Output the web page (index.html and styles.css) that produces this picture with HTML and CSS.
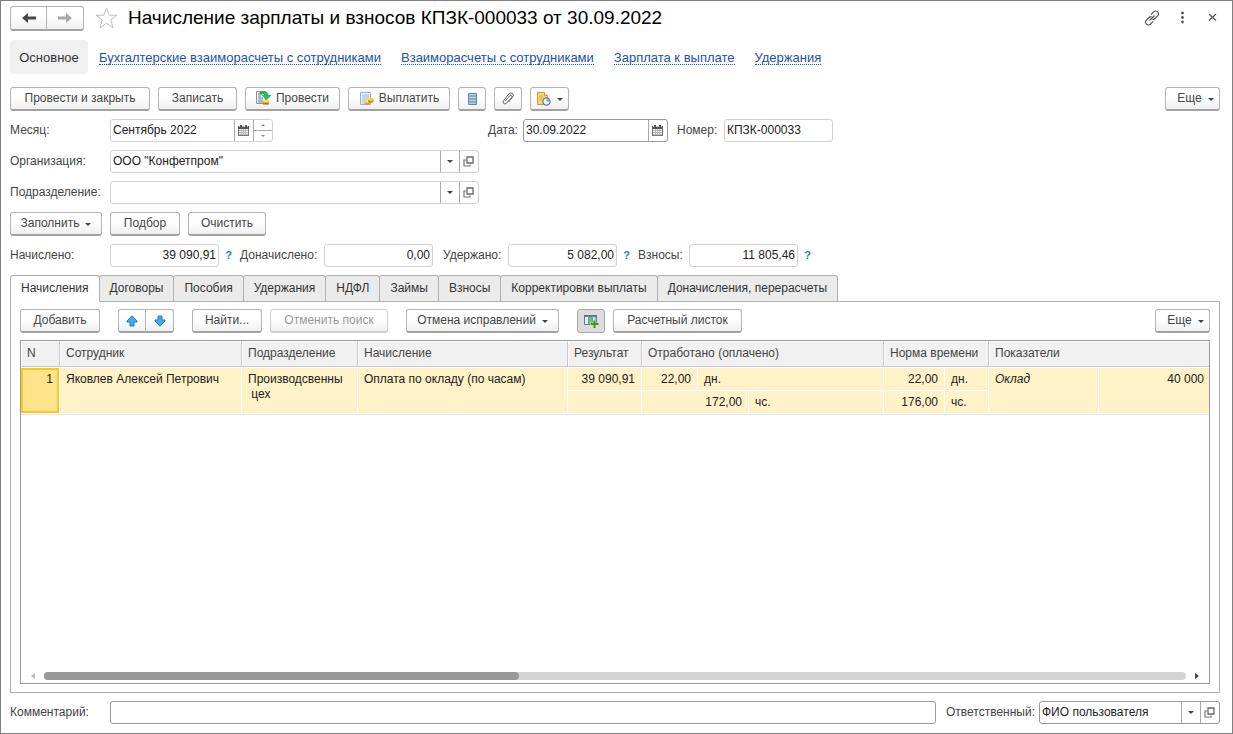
FILE: index.html
```html
<!DOCTYPE html>
<html lang="ru">
<head>
<meta charset="utf-8">
<title>Начисление зарплаты и взносов КПЗК-000033 от 30.09.2022</title>
<link rel="stylesheet" href="styles.css">
</head>
<body>
<svg class="defs" aria-hidden="true">
  <symbol id="calendar" viewBox="0 0 11 11"><path d="M0 1h11v10H0z" fill="#777"/><path d="M0 1h11v3H0z" fill="#555"/><path d="M2 0h2v2H2zM7 0h2v2H7z" fill="#555"/><path d="M1 1.500h1M4 1.500h3M9 1.500h1" stroke="#ccc" stroke-width="1"/><path d="M1 4h9v6H1z" fill="#eee"/><path d="M3.500 4v6M5.500 4v6M7.500 4v6M1 5.500h9M1 7.500h9M1 9.500h9" stroke="#bbb" stroke-width="1"/></symbol>
  <symbol id="open" viewBox="0 0 11 11"><path d="M4 1h6v6H4z" fill="none" stroke="#666" stroke-width="1.300"/><path d="M3 4H1v6h6V8.500" fill="none" stroke="#777" stroke-width="1.200"/></symbol>
</svg>
<main class="window">
  <header class="title-row">
    <div class="split">
      <button class="btn nav" aria-label="Назад"><svg width="14" height="12" viewBox="0 0 14 12"><path d="M0 6 6 1v3.500h8v3H6V11z" fill="#484848"/></svg></button>
      <button class="btn nav" aria-label="Вперед"><svg width="14" height="12" viewBox="0 0 14 12"><path d="M14 6 8 1v3.500H0v3h8V11z" fill="#a8a8a8"/></svg></button>
    </div>
    <button class="icon-btn star" aria-label="Избранное"><svg width="23" height="22" viewBox="0 0 23 22"><path d="M11.500 1 14.200 8.200H22l-6.200 4.800 2.300 7.900-6.600-4.700L4.900 20.900 7.200 13 1 8.200h7.800z" fill="#fff" stroke="#b9bdc4"/></svg></button>
    <h1>Начисление зарплаты и взносов КПЗК-000033 от 30.09.2022</h1>
    <div class="window-tools">
      <button class="icon-btn" aria-label="Ссылка"><svg width="16" height="16" viewBox="0 0 16 16" fill="none" stroke="#555" stroke-width="1.200"><path d="M7 4.500 9.600 1.900a2.700 2.700 0 0 1 4 0 2.700 2.700 0 0 1 0 4L11 8.500a2.700 2.700 0 0 1-2.500.7M9 11.500l-2.600 2.600a2.700 2.700 0 0 1-4 0 2.700 2.700 0 0 1 0-4L5 7.500a2.700 2.700 0 0 1 2.500-.7M5.500 10.500l5-5"/></svg></button>
      <button class="icon-btn" aria-label="Меню"><svg width="16" height="16" viewBox="0 0 16 16" fill="#555"><circle cx="8.500" cy="3" r="1.400"/><circle cx="8.500" cy="7.500" r="1.400"/><circle cx="8.500" cy="12" r="1.400"/></svg></button>
      <button class="icon-btn" aria-label="Закрыть"><svg width="16" height="16" viewBox="0 0 16 16" stroke="#555" stroke-width="1.200"><path d="m5 4 7 6.500m0-6.500-7 6.500"/></svg></button>
    </div>
  </header>

  <nav class="links">
    <span class="current">Основное</span>
    <a href="#">Бухгалтерские взаиморасчеты с сотрудниками</a>
    <a href="#">Взаиморасчеты с сотрудниками</a>
    <a href="#">Зарплата к выплате</a>
    <a href="#">Удержания</a>
  </nav>

  <div class="bar">
    <button class="btn w140">Провести и закрыть</button>
    <button class="btn w79">Записать</button>
    <button class="btn w95"><svg width="15" height="15" viewBox="0 0 15 15"><path d="M.500.500h9v12h-9z" fill="#f4f8fb" stroke="#8296ab"/><path d="M2 3h4M2 5h3M2 7h5M2 9h5M2 11h5" stroke="#64809a"/><path d="M4 1h4c3 0 4 1 4 3.500h2.500L10.500 9 6.500 4.500H9C9 3 7 2.500 4 2.800z" fill="#22c55e" stroke="#159447" stroke-width=".7"/><path d="M7 9.500h6V14H7z" fill="#e5b52c"/><ellipse cx="10" cy="9.800" rx="3" ry="1.200" fill="#ffe066"/><path d="M7 12q3 1.500 6 0" stroke="#a87812" fill="none"/></svg>Провести</button>
    <button class="btn w102"><svg width="15" height="15" viewBox="0 0 15 15"><path d="M1.500 1.500h10v12h-10z" fill="#f1f6fa" stroke="#9bb0c3"/><path d="M3 4h7M3 6h7M3 8h6M3 10h4M3 12h3" stroke="#9db5c9"/><path d="M6 10.500v2q2.500 2 5 0v-2z" fill="#d99d20"/><ellipse cx="8.500" cy="10.800" rx="2.500" ry="1.300" fill="#ffd95a"/><path d="M9 8v3q2.800 2 5.500 0V8z" fill="#cf9017"/><ellipse cx="11.800" cy="8.200" rx="2.700" ry="1.600" fill="#f9cf4c"/></svg>Выплатить</button>
    <button class="btn w28" aria-label="Реестр"><svg width="9" height="12" viewBox="0 0 9 12"><path d="M.500.500h8v11h-8z" fill="#b3d0e8" stroke="#6287a8"/><path d="M0 3h9M0 6h9M0 9h9" stroke="#6287a8"/></svg></button>
    <button class="btn w28" aria-label="Файлы"><svg width="12" height="13" viewBox="0 0 12 13" fill="none" stroke="#666" stroke-width="1"><path d="m3.300 8.900 4.600-5.400q1.100-.9 1.800 0t0 1.800l-5.200 6q-1.500 1.300-2.900.1-1.300-1.300 0-2.800L6.800 2Q8.900.1 10.600 1.500q1.600 1.600-.2 3.800L6.500 10"/></svg></button>
    <button class="btn w39" aria-label="Отчеты"><svg width="14" height="14" viewBox="0 0 14 14"><path d="M.500.500h7l3 3v9h-10z" fill="#f7d774" stroke="#cb9d36"/><path d="M7.500.500v3h3" fill="#fff0b8" stroke="#cb9d36"/><path d="M2 4h4M2 6h5M2 8h3" stroke="#d7b04e"/><circle cx="9.500" cy="9.500" r="3.600" fill="#f0f7ff" stroke="#66819f" stroke-width="1.300"/><path d="M9.500 6.500v3h3a3 3 0 0 0-3-3z" fill="#7fa8d4"/></svg><i class="caret"></i></button>
    <button class="btn more push">Еще<i class="caret"></i></button>
  </div>

  <div class="row">
    <label class="lead" for="month">Месяц:</label>
    <div class="field month"><input id="month" value="Сентябрь 2022"><button aria-label="Календарь"><svg width="11" height="11"><use href="#calendar"/></svg></button><span class="spin"><button aria-label="Больше"><i class="caret up"></i></button><button aria-label="Меньше"><i class="caret tiny"></i></button></span></div>
    <label class="date-label" for="date">Дата:</label>
    <div class="field dark date"><input id="date" value="30.09.2022"><button aria-label="Календарь"><svg width="11" height="11"><use href="#calendar"/></svg></button></div>
    <label class="number-label" for="number">Номер:</label>
    <div class="field number"><input id="number" value="КПЗК-000033"></div>
  </div>
  <div class="row">
    <label class="lead" for="org">Организация:</label>
    <div class="field wide"><input id="org" value="ООО &quot;Конфетпром&quot;"><button aria-label="Выбрать"><i class="caret"></i></button><button aria-label="Открыть"><svg width="11" height="11"><use href="#open"/></svg></button></div>
  </div>
  <div class="row">
    <label class="lead" for="dept">Подразделение:</label>
    <div class="field wide"><input id="dept"><button aria-label="Выбрать"><i class="caret"></i></button><button aria-label="Открыть"><svg width="11" height="11"><use href="#open"/></svg></button></div>
  </div>
  <div class="bar">
    <button class="btn w92">Заполнить<i class="caret"></i></button>
    <button class="btn w70">Подбор</button>
    <button class="btn w78">Очистить</button>
  </div>
  <div class="row totals">
    <label class="lead" for="t1">Начислено:</label>
    <div class="field sum"><input id="t1" value="39 090,91"></div><button class="help">?</button>
    <label class="t2" for="t2">Доначислено:</label>
    <div class="field sum"><input id="t2" value="0,00"></div>
    <label class="t3" for="t3">Удержано:</label>
    <div class="field sum"><input id="t3" value="5 082,00"></div><button class="help">?</button>
    <label class="t4" for="t4">Взносы:</label>
    <div class="field sum"><input id="t4" value="11 805,46"></div><button class="help">?</button>
  </div>

  <div class="tabs" role="tablist">
    <button role="tab" class="tab active" aria-selected="true">Начисления</button>
    <button role="tab" class="tab">Договоры</button>
    <button role="tab" class="tab">Пособия</button>
    <button role="tab" class="tab">Удержания</button>
    <button role="tab" class="tab">НДФЛ</button>
    <button role="tab" class="tab">Займы</button>
    <button role="tab" class="tab">Взносы</button>
    <button role="tab" class="tab">Корректировки выплаты</button>
    <button role="tab" class="tab">Доначисления, перерасчеты</button>
  </div>
  <section class="panel">
    <div class="bar panel-bar">
      <button class="btn w80">Добавить</button>
      <div class="split">
        <button class="btn w28" aria-label="Вверх"><svg width="12" height="12" viewBox="0 0 12 12"><path d="M6 .8 11 6v1H8v4H4V7H1V6z" fill="#42adf0" stroke="#2478b4"/></svg></button>
        <button class="btn w28" aria-label="Вниз"><svg width="12" height="12" viewBox="0 0 12 12"><path d="M6 11.200 11 6V5H8V1H4v4H1v1z" fill="#42adf0" stroke="#2478b4"/></svg></button>
      </div>
      <div class="group">
        <button class="btn w70">Найти...</button>
        <button class="btn w118" disabled>Отменить поиск</button>
      </div>
      <button class="btn w153">Отмена исправлений<i class="caret"></i></button>
      <div class="group">
        <button class="btn w28 pressed" aria-label="Настройка колонок"><svg width="15" height="14" viewBox="0 0 15 14"><path d="M.500 1.500h12v9H.500z" fill="#e8f2fa" stroke="#547d9c"/><path d="M0 1h13v2H0z" fill="#547d9c"/><path d="M5 3h4v7H5z" fill="#76bf64"/><path d="M4.500 2v8.500M8.500 2v8.500M11 3v5" stroke="#7698b0"/><path d="M10.500 6v8M6.500 10h8" stroke="#dcdcdc" stroke-width="3"/><path d="M10.500 6.500V14M7 10h7.500" stroke="#3d9a12" stroke-width="2"/></svg></button>
        <button class="btn w129">Расчетный листок</button>
      </div>
      <button class="btn more push">Еще<i class="caret"></i></button>
    </div>
    <div class="grid">
      <table>
        <colgroup><col class="c39"><col class="c182"><col class="c116"><col class="c210"><col class="c74"><col class="c56"><col class="c51"><col class="c135"><col class="c61"><col class="c44"><col class="c110"><col></colgroup>
        <thead><tr><th>N</th><th>Сотрудник</th><th>Подразделение</th><th>Начисление</th><th>Результат</th><th colspan="3">Отработано (оплачено)</th><th colspan="2">Норма времени</th><th colspan="2">Показатели</th></tr></thead>
        <tbody>
          <tr><td class="num selected" rowspan="2">1</td><td rowspan="2">Яковлев Алексей Петрович</td><td rowspan="2" class="pre">Производсвенны
 цех</td><td rowspan="2">Оплата по окладу (по часам)</td><td class="num">39 090,91</td><td class="num">22,00</td><td colspan="2">дн.</td><td class="num">22,00</td><td class="edge">дн.</td><td rowspan="2"><em>Оклад</em></td><td rowspan="2" class="num last">40 000</td></tr>
          <tr><td></td><td colspan="2" class="num">172,00</td><td>чс.</td><td class="num">176,00</td><td>чс.</td></tr>
        </tbody>
      </table>
      <div class="scroll"><i class="arrow left"></i><div class="track"><div class="thumb"></div></div><i class="arrow right"></i></div>
    </div>
  </section>

  <footer class="row">
    <label class="lead" for="comment">Комментарий:</label>
    <div class="field dark grow"><input id="comment"></div>
    <label class="resp-label" for="resp">Ответственный:</label>
    <div class="field dark resp"><input id="resp" value="ФИО пользователя"><button aria-label="Выбрать"><i class="caret"></i></button><button aria-label="Открыть"><svg width="11" height="11"><use href="#open"/></svg></button></div>
  </footer>
</main>
</body>
</html>
```
FILE: styles.css
```css
* { box-sizing: border-box; }
body { margin: 0; background: #fff; color: #444; font: 12px/15px "Liberation Sans", Arial, sans-serif; }
button, input { font: inherit; color: inherit; margin: 0; }
button { cursor: pointer; }
.defs { position: absolute; width: 0; height: 0; }
.window { min-height: 100vh; display: flex; flex-direction: column; gap: 8px; padding: 4px 12px 9px 9px; border: 1px solid #808080; }

.title-row { display: flex; align-items: center; height: 26px; }
h1 { margin: 0 0 0 10px; font-size: 19px; line-height: 24px; font-weight: 400; color: #000; }
.icon-btn { display: flex; align-items: center; justify-content: center; padding: 0; border: 0; background: none; }
.star { margin-left: 11px; }
.window-tools { display: flex; gap: 14px; margin-left: auto; }

.links { display: flex; align-items: center; gap: 20px; height: 34px; margin-top: 1px; font-size: 13px; }
.links .current { width: 78px; margin-right: -9px; padding: 10px 0 9px; border-radius: 4px; background: #f0f0f0; text-align: center; color: #333; }
.links a { margin-top: 2px; color: #1d50b0; text-decoration: none; border-bottom: 1px dotted #1d50b0; line-height: 13px; }

.bar { display: flex; gap: 8px; }
.links + .bar { margin-top: 5px; }
.btn { display: flex; align-items: center; justify-content: center; height: 24px; padding: 0; border: 1px solid #b4b4b4; border-bottom: 2px solid #a2a2a2; border-radius: 3px; background: linear-gradient(#fff 40%, #f0f0f0); color: #444; white-space: nowrap; }
.btn:disabled { color: #999; border-color: #d0d0d0; }
.w95 svg, .w102 svg { margin-right: 5px; }
.nav { width: 37px; height: 25px; }
.split { display: flex; }
.split .btn:first-child { border-radius: 3px 0 0 3px; }
.split .btn + .btn { width: 38px; margin-left: -1px; border-radius: 0 3px 3px 0; }
.split .w28 + .w28 { width: 29px; }
.pressed { background: #dcdcdc; border-bottom-width: 1px; border-color: #a8a8a8; }
.w28 { width: 28px; } .w39 { width: 39px; } .w70 { width: 70px; } .w78 { width: 78px; } .w79 { width: 79px; }
.w80 { width: 80px; } .w92 { width: 92px; } .w95 { width: 95px; } .w102 { width: 102px; }
.w118 { width: 118px; } .w129 { width: 129px; } .w140 { width: 140px; } .w153 { width: 153px; }
.more { width: 55px; padding-left: 6px; }
.push { margin-left: auto; }
.group { display: flex; gap: 8px; }
.caret { width: 0; height: 0; border: 3px solid transparent; border-top-color: #444; border-bottom: 0; }
.btn .caret { margin: 2px 0 0 6px; }
.tiny, .up { border-width: 2px; border-top-color: #888; border-bottom: 0; }
.up { transform: rotate(180deg); }

.row { display: flex; align-items: center; height: 23px; }
.lead { width: 100px; flex: none; }
.field { display: flex; height: 23px; border: 1px solid #d2d2d2; border-radius: 3px; background: #fff; color: #222; }
.field.dark { border-color: #999; }
.field input { flex: 1; min-width: 0; width: 0; padding: 0 2px; border: 0; background: none; outline: 0; }
.field button { display: flex; align-items: center; justify-content: center; width: 19px; padding: 0 1px 0 0; border: 0; border-left: 1px solid #aaa; background: none; }
.spin { display: flex; flex-direction: column; width: 19px; border-left: 1px solid #aaa; }
.field .spin button { flex: 1; width: 18px; border: 0; }
.field .spin button + button { border-top: 1px solid #aaa; }
.month { width: 163px; } .date { width: 145px; } .number { width: 109px; }
.wide { width: 369px; } .sum { width: 109px; } .resp { width: 181px; }
.date-label { width: 35px; margin-left: 215px; }
.number-label { width: 47px; margin-left: 9px; }
.sum input { text-align: right; }
.help { width: 19px; padding: 0; border: 0; background: none; color: #1a7fc4; font-size: 11px; font-weight: 700; }
.t2 { width: 84px; margin-left: 2px; } .t3 { width: 65px; margin-left: 10px; } .t4 { width: 51px; margin-left: 2px; }
.grow { flex: 1; }
.resp-label { width: 93px; margin-left: 10px; }

.tabs { display: flex; }
.tab { height: 26px; margin-left: -1px; padding: 0 10px 1px; border: 1px solid #b0b0b0; border-bottom: 0; border-radius: 3px 3px 0 0; background: #ebebeb; color: #333; white-space: nowrap; }
.tab.active { margin-left: 0; height: 27px; margin-bottom: -1px; padding-bottom: 2px; background: #fff; position: relative; }
.panel { flex: 1; display: flex; flex-direction: column; gap: 7px; margin-top: -8px; padding: 7px 9px 8px; border: 1px solid #b0b0b0; }
.panel-bar { gap: 18px; }

.grid { flex: 1; display: flex; flex-direction: column; border: 1px solid #999; }
table { width: 100%; table-layout: fixed; border-collapse: separate; border-spacing: 0; border-bottom: 1px solid #e4e4e4; color: #222; }
.c39 { width: 39px; } .c182 { width: 182px; } .c116 { width: 116px; } .c210 { width: 210px; }
.c74 { width: 74px; } .c56 { width: 56px; } .c51 { width: 51px; } .c135 { width: 135px; }
.c61 { width: 61px; } .c44 { width: 44px; } .c110 { width: 110px; }
th { height: 26px; padding: 0 0 1px 5px; border: 1px solid #fff; border-right-color: #c8c8cc; border-bottom-color: #c8c8cc; background: #f1f1f1; color: #444; font-weight: 400; text-align: left; white-space: nowrap; }
th:last-child { border-right: 0; }
td { height: 23px; padding: 4px 6px 3px; border-right: 1px solid #fff; border-bottom: 1px solid #fff; background: #fff2c8; vertical-align: top; white-space: nowrap; }
tr:first-child td { border-top: 1px solid #fff; }
.pre { white-space: pre; }
.num { text-align: right; }
.last { padding-right: 5px; border-right: 0; }
.selected { background: #ffe48c; box-shadow: inset 0 0 0 2px #fdc621; }
.scroll { display: flex; align-items: center; gap: 9px; margin: auto 9px 3px; }
.track { flex: 1; height: 8px; border-radius: 4px; background: #d4d4d4; }
.thumb { width: 41.6%; height: 8px; border-radius: 4px; background: #999; }
.arrow { width: 5px; border: 3px solid transparent; }
.left { border-left: 0; border-right: 4px solid #bbb; }
.right { border-right: 0; border-left: 4px solid #444; }
```
